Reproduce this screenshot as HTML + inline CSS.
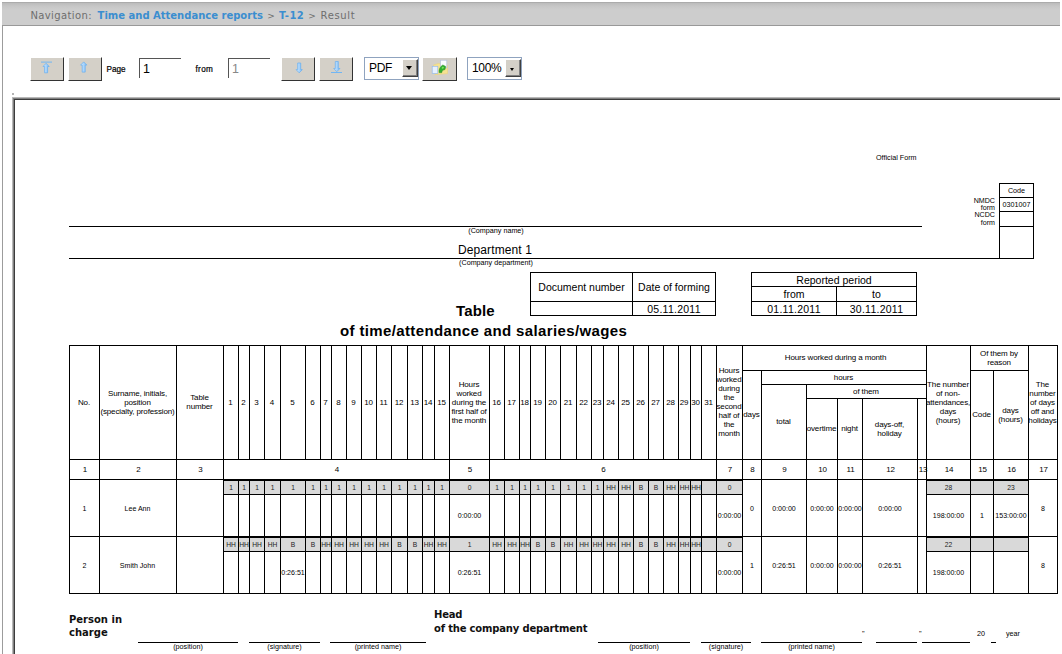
<!DOCTYPE html>
<html><head><meta charset="utf-8"><title>T-12 Result</title>
<style>
html,body{margin:0;padding:0;background:#fff;}
body{width:1062px;height:654px;position:relative;overflow:hidden;font-family:"Liberation Sans",sans-serif;color:#000;}
.l{position:absolute;}
.t{position:absolute;display:flex;align-items:center;justify-content:center;text-align:center;white-space:nowrap;color:#000;}
.t span{display:block;}
.h{font-size:8px;line-height:9px;letter-spacing:-0.13px;}
.n{font-size:8px;line-height:9px;letter-spacing:-0.13px;}
.d{font-size:7.05px;line-height:8px;}
.b{font-size:6.7px;line-height:8px;color:#1c1c1c;}
.a{position:absolute;white-space:nowrap;}
#nav{position:absolute;left:2px;top:2px;width:1058px;height:22px;background:linear-gradient(#bbbbbb 0,#c6c6c6 3px,#cdcdcd 7px,#cdcdcd 100%);border-top:1px solid #ababab;border-bottom:1px solid #999;}
.nv{position:absolute;top:10px;font-family:"DejaVu Sans",sans-serif;font-size:10px;line-height:12px;color:#6e6e6e;white-space:nowrap;}
.nb{color:#3b8ed0;font-weight:bold;}
.btn{position:absolute;top:57px;width:34px;height:24px;box-sizing:border-box;background:#d4d0c8;border-top:1px solid #fff;border-left:1px solid #fff;border-right:1px solid #333;border-bottom:1px solid #333;}
.btn svg{position:absolute;left:-1px;top:-1px;}
.inp{position:absolute;top:58px;width:42px;height:20px;box-sizing:border-box;border-top:1px solid #555;border-left:1px solid #555;font-size:12.5px;line-height:21px;padding-left:3px;}
.sel{position:absolute;top:57px;width:55px;height:23px;box-sizing:border-box;border:1px solid #8fa3bf;background:#fff;font-size:12px;letter-spacing:-0.3px;line-height:21px;padding-left:4px;}
.dd{position:absolute;left:37px;top:1px;width:16px;height:18px;box-sizing:border-box;background:#d4d0c8;border-top:1px solid #fff;border-left:1px solid #fff;border-right:1px solid #404040;border-bottom:1px solid #404040;}
.dd:after{content:"";position:absolute;left:0;top:0;right:0;bottom:0;border-right:1px solid #808080;border-bottom:1px solid #808080;}
.dd:before{content:"";position:absolute;left:3px;top:6px;border-left:3.5px solid transparent;border-right:3.5px solid transparent;border-top:4px solid #000;}
.dd.sm:before{left:4px;top:8px;border-left-width:2.7px;border-right-width:2.7px;border-top-width:3px;}
.s5{font-size:7.2px;line-height:8px;color:#000;}
.s8{font-size:10.5px;line-height:12px;color:#000;}
.dt{letter-spacing:0.25px;}
</style></head><body>
<!-- outer chrome -->
<div id="nav"></div>
<div class="nv" style="left:30.4px;letter-spacing:0.38px;">Navigation:</div>
<div class="nv nb" style="left:97.6px;">Time and Attendance reports</div>
<div class="nv" style="left:267.2px;font-size:9px;">&gt;</div>
<div class="nv nb" style="left:279.1px;letter-spacing:0.4px;">T-12</div>
<div class="nv" style="left:308.2px;font-size:9px;">&gt;</div>
<div class="nv" style="left:320.5px;letter-spacing:0.65px;">Result</div>
<div class="l" style="left:2px;top:26px;width:1px;height:628px;background:#9c9c9c"></div>

<!-- toolbar -->
<div class="btn" style="left:30px"><svg width="34" height="24" viewBox="0 0 34 24"><defs><linearGradient id="ag1" x1="0" x2="1" y1="0" y2="0"><stop offset="0" stop-color="#d6ecff"/><stop offset="1" stop-color="#7dbcf7"/></linearGradient></defs><rect x="11" y="4.6" width="11" height="1" fill="#72b6f3"/><path d="M16.1,6.3 L19.200000000000003,9.5 L17.6,9.5 L17.6,15.8 L14.600000000000001,15.8 L14.600000000000001,9.5 L13.000000000000002,9.5 Z" fill="url(#ag1)" stroke="#64adf1" stroke-width="0.7" stroke-linejoin="round"/></svg></div>
<div class="btn" style="left:68px"><svg width="34" height="24" viewBox="0 0 34 24"><defs><linearGradient id="ag2" x1="0" x2="1" y1="0" y2="0"><stop offset="0" stop-color="#d6ecff"/><stop offset="1" stop-color="#7dbcf7"/></linearGradient></defs><path d="M15.7,4.9 L18.8,8.100000000000001 L17.2,8.100000000000001 L17.2,15.1 L14.2,15.1 L14.2,8.100000000000001 L12.6,8.100000000000001 Z" fill="url(#ag2)" stroke="#64adf1" stroke-width="0.7" stroke-linejoin="round"/></svg></div>
<div class="a" style="left:106.5px;top:65px;font-size:8.2px;line-height:10px;-webkit-text-stroke:0.2px #000;">Page</div>
<div class="inp" style="left:139px;">1</div>
<div class="a" style="left:195.5px;top:65px;font-size:8.2px;line-height:10px;letter-spacing:0.35px;-webkit-text-stroke:0.2px #000;">from</div>
<div class="inp" style="left:228px;color:#888;">1</div>
<div class="btn" style="left:281px"><svg width="34" height="24" viewBox="0 0 34 24"><defs><linearGradient id="ag3" x1="0" x2="1" y1="0" y2="0"><stop offset="0" stop-color="#d6ecff"/><stop offset="1" stop-color="#7dbcf7"/></linearGradient></defs><path d="M18.2,15.8 L21.3,12.600000000000001 L19.7,12.600000000000001 L19.7,6 L16.7,6 L16.7,12.600000000000001 L15.1,12.600000000000001 Z" fill="url(#ag3)" stroke="#64adf1" stroke-width="0.7" stroke-linejoin="round"/></svg></div>
<div class="btn" style="left:319px"><svg width="34" height="24" viewBox="0 0 34 24"><defs><linearGradient id="ag4" x1="0" x2="1" y1="0" y2="0"><stop offset="0" stop-color="#d6ecff"/><stop offset="1" stop-color="#7dbcf7"/></linearGradient></defs><path d="M17.8,14.7 L20.900000000000002,11.5 L19.3,11.5 L19.3,4.5 L16.3,4.5 L16.3,11.5 L14.700000000000001,11.5 Z" fill="url(#ag4)" stroke="#64adf1" stroke-width="0.7" stroke-linejoin="round"/><rect x="12" y="15" width="11" height="1" fill="#72b6f3"/></svg></div>
<div class="sel" style="left:364px;">PDF<div class="dd"></div></div>
<div class="btn" style="left:422px;width:35px"><svg width="35" height="24" viewBox="0 0 35 24"><path d="M11.5,8 L16.5,6.4 L25.5,8.5 L25.5,16.6 L13,17.7 Z" fill="#f5e291" stroke="#ecd372" stroke-width="0.5"/>
<rect x="18.5" y="3.2" width="6.3" height="7.6" fill="#f9fcff" stroke="#b4c2dc" stroke-width="0.7"/>
<rect x="10.2" y="9.3" width="5.6" height="7.2" fill="#e6f1ff" stroke="#98b9e6" stroke-width="0.7"/>
<path d="M17.1,15.6 C16.8,12.4 18,9.6 20.8,8 L23.6,9.4 L23,12.6 C21.2,12.6 20.2,13.6 19.6,15.8 Z" fill="#31b031" stroke="#1c861c" stroke-width="0.5"/>
<path d="M19.8,10.2 C20.6,9.6 21.6,9.6 22,10.4 C21.6,11.4 20.6,11.8 19.8,11.6 Z" fill="#7be25e"/></svg></div>
<div class="sel" style="left:467px;">100%<div class="dd sm"></div></div>

<!-- viewer frame -->
<div class="l" style="left:12px;top:97px;width:1048px;height:1px;background:#b8b8b8"></div>
<div class="l" style="left:12px;top:97px;width:1px;height:557px;background:#b8b8b8"></div>
<div class="l" style="left:13px;top:98px;width:1047px;height:1px;background:#808080"></div>
<div class="l" style="left:13px;top:98px;width:1px;height:556px;background:#808080"></div>
<div class="l" style="left:14px;top:99px;width:1046px;height:1px;background:#3c3c3c"></div>
<div class="l" style="left:14px;top:99px;width:1px;height:555px;background:#3c3c3c"></div>
<div class="l" style="left:12px;top:93px;width:2px;height:2px;background:#b4b4b4"></div>

<!-- report header -->
<div class="a s5" style="left:876px;top:154px;">Official Form</div>
<div class="l" style="left:69px;top:226px;width:853px;height:1px;background:#000"></div>
<div class="l" style="left:69px;top:258px;width:931px;height:1px;background:#000"></div>
<div class="t s5" style="left:396px;top:227px;width:200px;height:8px;"><span>(Company name)</span></div>
<div class="t" style="left:395px;top:243px;width:200px;height:14px;font-size:12px;line-height:14px;letter-spacing:0.12px;"><span>Department 1</span></div>
<div class="t s5" style="left:396px;top:259px;width:200px;height:8px;"><span>(Company department)</span></div>
<!-- code box -->
<div class="l" style="left:999px;top:183px;width:35px;height:1px;background:#000"></div>
<div class="l" style="left:999px;top:197px;width:35px;height:1px;background:#000"></div>
<div class="l" style="left:999px;top:211px;width:35px;height:1px;background:#000"></div>
<div class="l" style="left:999px;top:226px;width:35px;height:1px;background:#000"></div>
<div class="l" style="left:999px;top:258px;width:35px;height:1px;background:#000"></div>
<div class="l" style="left:999px;top:183px;width:1px;height:76px;background:#000"></div>
<div class="l" style="left:1033px;top:183px;width:1px;height:76px;background:#000"></div>
<div class="t s5" style="left:999px;top:184px;width:35px;height:13px;"><span>Code</span></div>
<div class="t s5" style="left:999px;top:198px;width:35px;height:13px;"><span>0301007</span></div>
<div class="a s5" style="left:935px;top:197.6px;width:60px;text-align:right;line-height:7.4px;font-size:7.1px;">NMDC<br>form<br>NCDC<br>form</div>
<!-- doc number table -->
<div class="l" style="left:530px;top:272px;width:186px;height:1px;background:#000"></div>
<div class="l" style="left:530px;top:301px;width:186px;height:1px;background:#000"></div>
<div class="l" style="left:530px;top:315px;width:186px;height:1px;background:#000"></div>
<div class="l" style="left:530px;top:272px;width:1px;height:44px;background:#000"></div>
<div class="l" style="left:632px;top:272px;width:1px;height:44px;background:#000"></div>
<div class="l" style="left:715px;top:272px;width:1px;height:44px;background:#000"></div>
<div class="t s8" style="left:531px;top:273px;width:101px;height:28px;"><span>Document number</span></div>
<div class="t s8" style="left:633px;top:273px;width:82px;height:28px;"><span>Date of forming</span></div>
<div class="t s8 dt" style="left:633px;top:302px;width:82px;height:14px;"><span>05.11.2011</span></div>
<!-- reported period -->
<div class="l" style="left:751px;top:272px;width:166px;height:1px;background:#000"></div>
<div class="l" style="left:751px;top:286px;width:166px;height:1px;background:#000"></div>
<div class="l" style="left:751px;top:301px;width:166px;height:1px;background:#000"></div>
<div class="l" style="left:751px;top:315px;width:166px;height:1px;background:#000"></div>
<div class="l" style="left:751px;top:272px;width:1px;height:44px;background:#000"></div>
<div class="l" style="left:836px;top:286px;width:1px;height:30px;background:#000"></div>
<div class="l" style="left:916px;top:272px;width:1px;height:44px;background:#000"></div>
<div class="t s8" style="left:752px;top:273px;width:164px;height:14px;"><span>Reported period</span></div>
<div class="t s8" style="left:752px;top:287px;width:84px;height:14px;"><span>from</span></div>
<div class="t s8" style="left:837px;top:287px;width:79px;height:14px;"><span>to</span></div>
<div class="t s8 dt" style="left:752px;top:302px;width:84px;height:14px;"><span>01.11.2011</span></div>
<div class="t s8 dt" style="left:837px;top:302px;width:79px;height:14px;"><span>30.11.2011</span></div>
<!-- title -->
<div class="a" style="left:456px;top:302px;font-weight:bold;font-size:15px;line-height:18px;letter-spacing:0.15px;color:#000;">Table</div>
<div class="a" style="left:340px;top:322px;font-weight:bold;font-size:15px;line-height:18px;letter-spacing:0.37px;color:#000;">of time/attendance and salaries/wages</div>

<!-- main table -->
<div class="l" style="left:69px;top:345px;width:989px;height:1px;background:#000"></div>
<div class="l" style="left:69px;top:345px;width:1px;height:249px;background:#000"></div>
<div class="l" style="left:99px;top:345px;width:1px;height:249px;background:#000"></div>
<div class="l" style="left:176px;top:345px;width:1px;height:249px;background:#000"></div>
<div class="l" style="left:223px;top:345px;width:1px;height:249px;background:#000"></div>
<div class="l" style="left:238px;top:345px;width:1px;height:114px;background:#000"></div>
<div class="l" style="left:238px;top:479px;width:1px;height:115px;background:#000"></div>
<div class="l" style="left:249px;top:345px;width:1px;height:114px;background:#000"></div>
<div class="l" style="left:249px;top:479px;width:1px;height:115px;background:#000"></div>
<div class="l" style="left:264px;top:345px;width:1px;height:114px;background:#000"></div>
<div class="l" style="left:264px;top:479px;width:1px;height:115px;background:#000"></div>
<div class="l" style="left:280px;top:345px;width:1px;height:114px;background:#000"></div>
<div class="l" style="left:280px;top:479px;width:1px;height:115px;background:#000"></div>
<div class="l" style="left:305px;top:345px;width:1px;height:114px;background:#000"></div>
<div class="l" style="left:305px;top:479px;width:1px;height:115px;background:#000"></div>
<div class="l" style="left:320px;top:345px;width:1px;height:114px;background:#000"></div>
<div class="l" style="left:320px;top:479px;width:1px;height:115px;background:#000"></div>
<div class="l" style="left:331px;top:345px;width:1px;height:114px;background:#000"></div>
<div class="l" style="left:331px;top:479px;width:1px;height:115px;background:#000"></div>
<div class="l" style="left:346px;top:345px;width:1px;height:114px;background:#000"></div>
<div class="l" style="left:346px;top:479px;width:1px;height:115px;background:#000"></div>
<div class="l" style="left:361px;top:345px;width:1px;height:114px;background:#000"></div>
<div class="l" style="left:361px;top:479px;width:1px;height:115px;background:#000"></div>
<div class="l" style="left:376px;top:345px;width:1px;height:114px;background:#000"></div>
<div class="l" style="left:376px;top:479px;width:1px;height:115px;background:#000"></div>
<div class="l" style="left:391px;top:345px;width:1px;height:114px;background:#000"></div>
<div class="l" style="left:391px;top:479px;width:1px;height:115px;background:#000"></div>
<div class="l" style="left:407px;top:345px;width:1px;height:114px;background:#000"></div>
<div class="l" style="left:407px;top:479px;width:1px;height:115px;background:#000"></div>
<div class="l" style="left:422px;top:345px;width:1px;height:114px;background:#000"></div>
<div class="l" style="left:422px;top:479px;width:1px;height:115px;background:#000"></div>
<div class="l" style="left:434px;top:345px;width:1px;height:114px;background:#000"></div>
<div class="l" style="left:434px;top:479px;width:1px;height:115px;background:#000"></div>
<div class="l" style="left:449px;top:345px;width:1px;height:249px;background:#000"></div>
<div class="l" style="left:489px;top:345px;width:1px;height:249px;background:#000"></div>
<div class="l" style="left:504px;top:345px;width:1px;height:114px;background:#000"></div>
<div class="l" style="left:504px;top:479px;width:1px;height:115px;background:#000"></div>
<div class="l" style="left:519px;top:345px;width:1px;height:114px;background:#000"></div>
<div class="l" style="left:519px;top:479px;width:1px;height:115px;background:#000"></div>
<div class="l" style="left:530px;top:345px;width:1px;height:114px;background:#000"></div>
<div class="l" style="left:530px;top:479px;width:1px;height:115px;background:#000"></div>
<div class="l" style="left:545px;top:345px;width:1px;height:114px;background:#000"></div>
<div class="l" style="left:545px;top:479px;width:1px;height:115px;background:#000"></div>
<div class="l" style="left:560px;top:345px;width:1px;height:114px;background:#000"></div>
<div class="l" style="left:560px;top:479px;width:1px;height:115px;background:#000"></div>
<div class="l" style="left:576px;top:345px;width:1px;height:114px;background:#000"></div>
<div class="l" style="left:576px;top:479px;width:1px;height:115px;background:#000"></div>
<div class="l" style="left:591px;top:345px;width:1px;height:114px;background:#000"></div>
<div class="l" style="left:591px;top:479px;width:1px;height:115px;background:#000"></div>
<div class="l" style="left:603px;top:345px;width:1px;height:114px;background:#000"></div>
<div class="l" style="left:603px;top:479px;width:1px;height:115px;background:#000"></div>
<div class="l" style="left:618px;top:345px;width:1px;height:114px;background:#000"></div>
<div class="l" style="left:618px;top:479px;width:1px;height:115px;background:#000"></div>
<div class="l" style="left:633px;top:345px;width:1px;height:114px;background:#000"></div>
<div class="l" style="left:633px;top:479px;width:1px;height:115px;background:#000"></div>
<div class="l" style="left:648px;top:345px;width:1px;height:114px;background:#000"></div>
<div class="l" style="left:648px;top:479px;width:1px;height:115px;background:#000"></div>
<div class="l" style="left:663px;top:345px;width:1px;height:114px;background:#000"></div>
<div class="l" style="left:663px;top:479px;width:1px;height:115px;background:#000"></div>
<div class="l" style="left:678px;top:345px;width:1px;height:114px;background:#000"></div>
<div class="l" style="left:678px;top:479px;width:1px;height:115px;background:#000"></div>
<div class="l" style="left:690px;top:345px;width:1px;height:114px;background:#000"></div>
<div class="l" style="left:690px;top:479px;width:1px;height:115px;background:#000"></div>
<div class="l" style="left:701px;top:345px;width:1px;height:114px;background:#000"></div>
<div class="l" style="left:701px;top:479px;width:1px;height:115px;background:#000"></div>
<div class="l" style="left:716px;top:345px;width:1px;height:249px;background:#000"></div>
<div class="l" style="left:742px;top:345px;width:1px;height:249px;background:#000"></div>
<div class="l" style="left:761px;top:370px;width:1px;height:224px;background:#000"></div>
<div class="l" style="left:806px;top:384px;width:1px;height:210px;background:#000"></div>
<div class="l" style="left:837px;top:398px;width:1px;height:196px;background:#000"></div>
<div class="l" style="left:862px;top:398px;width:1px;height:196px;background:#000"></div>
<div class="l" style="left:917px;top:398px;width:1px;height:196px;background:#000"></div>
<div class="l" style="left:926px;top:345px;width:1px;height:249px;background:#000"></div>
<div class="l" style="left:970px;top:345px;width:1px;height:249px;background:#000"></div>
<div class="l" style="left:993px;top:370px;width:1px;height:224px;background:#000"></div>
<div class="l" style="left:1028px;top:345px;width:1px;height:249px;background:#000"></div>
<div class="l" style="left:1057px;top:345px;width:1px;height:249px;background:#000"></div>
<div class="l" style="left:742px;top:370px;width:184px;height:1px;background:#000"></div>
<div class="l" style="left:970px;top:370px;width:58px;height:1px;background:#000"></div>
<div class="l" style="left:761px;top:384px;width:165px;height:1px;background:#000"></div>
<div class="l" style="left:806px;top:398px;width:120px;height:1px;background:#000"></div>
<div class="l" style="left:69px;top:459px;width:989px;height:1px;background:#000"></div>
<div class="l" style="left:69px;top:479px;width:989px;height:1px;background:#000"></div>
<div class="l" style="left:69px;top:536px;width:989px;height:1px;background:#000"></div>
<div class="l" style="left:69px;top:593px;width:989px;height:1px;background:#000"></div>
<div class="l" style="left:224px;top:480px;width:518px;height:14px;background:#d9d9d9"></div>
<div class="l" style="left:223px;top:480px;width:520px;height:1px;background:#000"></div>
<div class="l" style="left:223px;top:494px;width:520px;height:1px;background:#000"></div>
<div class="l" style="left:224px;top:537px;width:518px;height:14px;background:#d9d9d9"></div>
<div class="l" style="left:223px;top:537px;width:520px;height:1px;background:#000"></div>
<div class="l" style="left:223px;top:551px;width:520px;height:1px;background:#000"></div>
<div class="l" style="left:927px;top:480px;width:101px;height:14px;background:#d9d9d9"></div>
<div class="l" style="left:926px;top:480px;width:103px;height:1px;background:#000"></div>
<div class="l" style="left:926px;top:494px;width:103px;height:1px;background:#000"></div>
<div class="l" style="left:927px;top:537px;width:101px;height:14px;background:#d9d9d9"></div>
<div class="l" style="left:926px;top:537px;width:103px;height:1px;background:#000"></div>
<div class="l" style="left:926px;top:551px;width:103px;height:1px;background:#000"></div>
<div class="l" style="left:223px;top:479px;width:1px;height:16px;background:#000"></div>
<div class="l" style="left:223px;top:536px;width:1px;height:16px;background:#000"></div>
<div class="l" style="left:238px;top:479px;width:1px;height:16px;background:#000"></div>
<div class="l" style="left:238px;top:536px;width:1px;height:16px;background:#000"></div>
<div class="l" style="left:249px;top:479px;width:1px;height:16px;background:#000"></div>
<div class="l" style="left:249px;top:536px;width:1px;height:16px;background:#000"></div>
<div class="l" style="left:264px;top:479px;width:1px;height:16px;background:#000"></div>
<div class="l" style="left:264px;top:536px;width:1px;height:16px;background:#000"></div>
<div class="l" style="left:280px;top:479px;width:1px;height:16px;background:#000"></div>
<div class="l" style="left:280px;top:536px;width:1px;height:16px;background:#000"></div>
<div class="l" style="left:305px;top:479px;width:1px;height:16px;background:#000"></div>
<div class="l" style="left:305px;top:536px;width:1px;height:16px;background:#000"></div>
<div class="l" style="left:320px;top:479px;width:1px;height:16px;background:#000"></div>
<div class="l" style="left:320px;top:536px;width:1px;height:16px;background:#000"></div>
<div class="l" style="left:331px;top:479px;width:1px;height:16px;background:#000"></div>
<div class="l" style="left:331px;top:536px;width:1px;height:16px;background:#000"></div>
<div class="l" style="left:346px;top:479px;width:1px;height:16px;background:#000"></div>
<div class="l" style="left:346px;top:536px;width:1px;height:16px;background:#000"></div>
<div class="l" style="left:361px;top:479px;width:1px;height:16px;background:#000"></div>
<div class="l" style="left:361px;top:536px;width:1px;height:16px;background:#000"></div>
<div class="l" style="left:376px;top:479px;width:1px;height:16px;background:#000"></div>
<div class="l" style="left:376px;top:536px;width:1px;height:16px;background:#000"></div>
<div class="l" style="left:391px;top:479px;width:1px;height:16px;background:#000"></div>
<div class="l" style="left:391px;top:536px;width:1px;height:16px;background:#000"></div>
<div class="l" style="left:407px;top:479px;width:1px;height:16px;background:#000"></div>
<div class="l" style="left:407px;top:536px;width:1px;height:16px;background:#000"></div>
<div class="l" style="left:422px;top:479px;width:1px;height:16px;background:#000"></div>
<div class="l" style="left:422px;top:536px;width:1px;height:16px;background:#000"></div>
<div class="l" style="left:434px;top:479px;width:1px;height:16px;background:#000"></div>
<div class="l" style="left:434px;top:536px;width:1px;height:16px;background:#000"></div>
<div class="l" style="left:449px;top:479px;width:1px;height:16px;background:#000"></div>
<div class="l" style="left:449px;top:536px;width:1px;height:16px;background:#000"></div>
<div class="l" style="left:489px;top:479px;width:1px;height:16px;background:#000"></div>
<div class="l" style="left:489px;top:536px;width:1px;height:16px;background:#000"></div>
<div class="l" style="left:504px;top:479px;width:1px;height:16px;background:#000"></div>
<div class="l" style="left:504px;top:536px;width:1px;height:16px;background:#000"></div>
<div class="l" style="left:519px;top:479px;width:1px;height:16px;background:#000"></div>
<div class="l" style="left:519px;top:536px;width:1px;height:16px;background:#000"></div>
<div class="l" style="left:530px;top:479px;width:1px;height:16px;background:#000"></div>
<div class="l" style="left:530px;top:536px;width:1px;height:16px;background:#000"></div>
<div class="l" style="left:545px;top:479px;width:1px;height:16px;background:#000"></div>
<div class="l" style="left:545px;top:536px;width:1px;height:16px;background:#000"></div>
<div class="l" style="left:560px;top:479px;width:1px;height:16px;background:#000"></div>
<div class="l" style="left:560px;top:536px;width:1px;height:16px;background:#000"></div>
<div class="l" style="left:576px;top:479px;width:1px;height:16px;background:#000"></div>
<div class="l" style="left:576px;top:536px;width:1px;height:16px;background:#000"></div>
<div class="l" style="left:591px;top:479px;width:1px;height:16px;background:#000"></div>
<div class="l" style="left:591px;top:536px;width:1px;height:16px;background:#000"></div>
<div class="l" style="left:603px;top:479px;width:1px;height:16px;background:#000"></div>
<div class="l" style="left:603px;top:536px;width:1px;height:16px;background:#000"></div>
<div class="l" style="left:618px;top:479px;width:1px;height:16px;background:#000"></div>
<div class="l" style="left:618px;top:536px;width:1px;height:16px;background:#000"></div>
<div class="l" style="left:633px;top:479px;width:1px;height:16px;background:#000"></div>
<div class="l" style="left:633px;top:536px;width:1px;height:16px;background:#000"></div>
<div class="l" style="left:648px;top:479px;width:1px;height:16px;background:#000"></div>
<div class="l" style="left:648px;top:536px;width:1px;height:16px;background:#000"></div>
<div class="l" style="left:663px;top:479px;width:1px;height:16px;background:#000"></div>
<div class="l" style="left:663px;top:536px;width:1px;height:16px;background:#000"></div>
<div class="l" style="left:678px;top:479px;width:1px;height:16px;background:#000"></div>
<div class="l" style="left:678px;top:536px;width:1px;height:16px;background:#000"></div>
<div class="l" style="left:690px;top:479px;width:1px;height:16px;background:#000"></div>
<div class="l" style="left:690px;top:536px;width:1px;height:16px;background:#000"></div>
<div class="l" style="left:701px;top:479px;width:1px;height:16px;background:#000"></div>
<div class="l" style="left:701px;top:536px;width:1px;height:16px;background:#000"></div>
<div class="l" style="left:716px;top:479px;width:1px;height:16px;background:#000"></div>
<div class="l" style="left:716px;top:536px;width:1px;height:16px;background:#000"></div>
<div class="l" style="left:742px;top:479px;width:1px;height:16px;background:#000"></div>
<div class="l" style="left:742px;top:536px;width:1px;height:16px;background:#000"></div>
<div class="l" style="left:926px;top:479px;width:1px;height:16px;background:#000"></div>
<div class="l" style="left:926px;top:536px;width:1px;height:16px;background:#000"></div>
<div class="l" style="left:970px;top:479px;width:1px;height:16px;background:#000"></div>
<div class="l" style="left:970px;top:536px;width:1px;height:16px;background:#000"></div>
<div class="l" style="left:993px;top:479px;width:1px;height:16px;background:#000"></div>
<div class="l" style="left:993px;top:536px;width:1px;height:16px;background:#000"></div>
<div class="l" style="left:1028px;top:479px;width:1px;height:16px;background:#000"></div>
<div class="l" style="left:1028px;top:536px;width:1px;height:16px;background:#000"></div>
<div class="t h" style="left:69px;top:345px;width:30px;height:114px;"><span>No.</span></div>
<div class="t h" style="left:99px;top:345px;width:77px;height:114px;"><span>Surname, initials,<br>position<br>(specialty, profession)</span></div>
<div class="t h" style="left:176px;top:345px;width:47px;height:114px;"><span>Table<br>number</span></div>
<div class="t h" style="left:223px;top:345px;width:15px;height:114px;"><span>1</span></div>
<div class="t h" style="left:238px;top:345px;width:11px;height:114px;"><span>2</span></div>
<div class="t h" style="left:249px;top:345px;width:15px;height:114px;"><span>3</span></div>
<div class="t h" style="left:264px;top:345px;width:16px;height:114px;"><span>4</span></div>
<div class="t h" style="left:280px;top:345px;width:25px;height:114px;"><span>5</span></div>
<div class="t h" style="left:305px;top:345px;width:15px;height:114px;"><span>6</span></div>
<div class="t h" style="left:320px;top:345px;width:11px;height:114px;"><span>7</span></div>
<div class="t h" style="left:331px;top:345px;width:15px;height:114px;"><span>8</span></div>
<div class="t h" style="left:346px;top:345px;width:15px;height:114px;"><span>9</span></div>
<div class="t h" style="left:361px;top:345px;width:15px;height:114px;"><span>10</span></div>
<div class="t h" style="left:376px;top:345px;width:15px;height:114px;"><span>11</span></div>
<div class="t h" style="left:391px;top:345px;width:16px;height:114px;"><span>12</span></div>
<div class="t h" style="left:407px;top:345px;width:15px;height:114px;"><span>13</span></div>
<div class="t h" style="left:422px;top:345px;width:12px;height:114px;"><span>14</span></div>
<div class="t h" style="left:434px;top:345px;width:15px;height:114px;"><span>15</span></div>
<div class="t h" style="left:449px;top:345px;width:40px;height:114px;"><span>Hours<br>worked<br>during the<br>first half of<br>the month</span></div>
<div class="t h" style="left:489px;top:345px;width:15px;height:114px;"><span>16</span></div>
<div class="t h" style="left:504px;top:345px;width:15px;height:114px;"><span>17</span></div>
<div class="t h" style="left:519px;top:345px;width:11px;height:114px;"><span>18</span></div>
<div class="t h" style="left:530px;top:345px;width:15px;height:114px;"><span>19</span></div>
<div class="t h" style="left:545px;top:345px;width:15px;height:114px;"><span>20</span></div>
<div class="t h" style="left:560px;top:345px;width:16px;height:114px;"><span>21</span></div>
<div class="t h" style="left:576px;top:345px;width:15px;height:114px;"><span>22</span></div>
<div class="t h" style="left:591px;top:345px;width:12px;height:114px;"><span>23</span></div>
<div class="t h" style="left:603px;top:345px;width:15px;height:114px;"><span>24</span></div>
<div class="t h" style="left:618px;top:345px;width:15px;height:114px;"><span>25</span></div>
<div class="t h" style="left:633px;top:345px;width:15px;height:114px;"><span>26</span></div>
<div class="t h" style="left:648px;top:345px;width:15px;height:114px;"><span>27</span></div>
<div class="t h" style="left:663px;top:345px;width:15px;height:114px;"><span>28</span></div>
<div class="t h" style="left:678px;top:345px;width:12px;height:114px;"><span>29</span></div>
<div class="t h" style="left:690px;top:345px;width:11px;height:114px;"><span>30</span></div>
<div class="t h" style="left:701px;top:345px;width:15px;height:114px;"><span>31</span></div>
<div class="t h" style="left:716px;top:345px;width:26px;height:114px;"><span>Hours<br>worked<br>during<br>the<br>second<br>half of<br>the<br>month</span></div>
<div class="t h" style="left:745px;top:345px;width:181px;height:25px;"><span>Hours worked during a month</span></div>
<div class="t h" style="left:742px;top:370px;width:19px;height:89px;"><span>days</span></div>
<div class="t h" style="left:761px;top:370px;width:165px;height:14px;"><span>hours</span></div>
<div class="t h" style="left:761px;top:384px;width:45px;height:75px;"><span>total</span></div>
<div class="t h" style="left:806px;top:384px;width:120px;height:14px;"><span>of them</span></div>
<div class="t h" style="left:806px;top:398px;width:31px;height:61px;"><span>overtime</span></div>
<div class="t h" style="left:837px;top:398px;width:25px;height:61px;"><span>night</span></div>
<div class="t h" style="left:862px;top:398px;width:55px;height:61px;"><span>days-off,<br>holiday</span></div>
<div class="t h" style="left:926px;top:345px;width:44px;height:114px;"><span>The number<br>of non-<br>attendances,<br>days<br>(hours)</span></div>
<div class="t h" style="left:970px;top:345px;width:58px;height:25px;"><span>Of them by<br>reason</span></div>
<div class="t h" style="left:970px;top:370px;width:23px;height:89px;"><span>Code</span></div>
<div class="t h" style="left:993px;top:370px;width:35px;height:89px;"><span>days<br>(hours)</span></div>
<div class="t h" style="left:1028px;top:345px;width:29px;height:114px;"><span>The<br>number<br>of days<br>off and<br>holidays</span></div>
<div class="t n" style="left:71px;top:459px;width:28px;height:20px;"><span>1</span></div>
<div class="t n" style="left:101px;top:459px;width:75px;height:20px;"><span>2</span></div>
<div class="t n" style="left:178px;top:459px;width:45px;height:20px;"><span>3</span></div>
<div class="t n" style="left:225px;top:459px;width:224px;height:20px;"><span>4</span></div>
<div class="t n" style="left:451px;top:459px;width:38px;height:20px;"><span>5</span></div>
<div class="t n" style="left:491px;top:459px;width:225px;height:20px;"><span>6</span></div>
<div class="t n" style="left:718px;top:459px;width:24px;height:20px;"><span>7</span></div>
<div class="t n" style="left:744px;top:459px;width:17px;height:20px;"><span>8</span></div>
<div class="t n" style="left:763px;top:459px;width:43px;height:20px;"><span>9</span></div>
<div class="t n" style="left:808px;top:459px;width:29px;height:20px;"><span>10</span></div>
<div class="t n" style="left:839px;top:459px;width:23px;height:20px;"><span>11</span></div>
<div class="t n" style="left:864px;top:459px;width:53px;height:20px;"><span>12</span></div>
<div class="t n" style="left:916px;top:459px;width:14px;height:20px;"><span>13</span></div>
<div class="t n" style="left:928px;top:459px;width:42px;height:20px;"><span>14</span></div>
<div class="t n" style="left:972px;top:459px;width:21px;height:20px;"><span>15</span></div>
<div class="t n" style="left:995px;top:459px;width:33px;height:20px;"><span>16</span></div>
<div class="t n" style="left:1030px;top:459px;width:27px;height:20px;"><span>17</span></div>
<div class="t d" style="left:70px;top:481px;width:29px;height:55px;"><span>1</span></div>
<div class="t d" style="left:99px;top:481px;width:77px;height:55px;"><span>Lee Ann</span></div>
<div class="t b" style="left:223px;top:481px;width:16px;height:13px;"><span>1</span></div>
<div class="t b" style="left:238px;top:481px;width:12px;height:13px;"><span>1</span></div>
<div class="t b" style="left:249px;top:481px;width:16px;height:13px;"><span>1</span></div>
<div class="t b" style="left:264px;top:481px;width:17px;height:13px;"><span>1</span></div>
<div class="t b" style="left:280px;top:481px;width:26px;height:13px;"><span>1</span></div>
<div class="t b" style="left:305px;top:481px;width:16px;height:13px;"><span>1</span></div>
<div class="t b" style="left:320px;top:481px;width:12px;height:13px;"><span>1</span></div>
<div class="t b" style="left:331px;top:481px;width:16px;height:13px;"><span>1</span></div>
<div class="t b" style="left:346px;top:481px;width:16px;height:13px;"><span>1</span></div>
<div class="t b" style="left:361px;top:481px;width:16px;height:13px;"><span>1</span></div>
<div class="t b" style="left:376px;top:481px;width:16px;height:13px;"><span>1</span></div>
<div class="t b" style="left:391px;top:481px;width:17px;height:13px;"><span>1</span></div>
<div class="t b" style="left:407px;top:481px;width:16px;height:13px;"><span>1</span></div>
<div class="t b" style="left:422px;top:481px;width:13px;height:13px;"><span>1</span></div>
<div class="t b" style="left:434px;top:481px;width:16px;height:13px;"><span>1</span></div>
<div class="t b" style="left:489px;top:481px;width:16px;height:13px;"><span>1</span></div>
<div class="t b" style="left:504px;top:481px;width:16px;height:13px;"><span>1</span></div>
<div class="t b" style="left:519px;top:481px;width:12px;height:13px;"><span>1</span></div>
<div class="t b" style="left:530px;top:481px;width:16px;height:13px;"><span>1</span></div>
<div class="t b" style="left:545px;top:481px;width:16px;height:13px;"><span>1</span></div>
<div class="t b" style="left:560px;top:481px;width:17px;height:13px;"><span>1</span></div>
<div class="t b" style="left:576px;top:481px;width:16px;height:13px;"><span>1</span></div>
<div class="t b" style="left:591px;top:481px;width:13px;height:13px;"><span>1</span></div>
<div class="t b" style="left:603px;top:481px;width:16px;height:13px;"><span>HH</span></div>
<div class="t b" style="left:618px;top:481px;width:16px;height:13px;"><span>HH</span></div>
<div class="t b" style="left:633px;top:481px;width:16px;height:13px;"><span>B</span></div>
<div class="t b" style="left:648px;top:481px;width:16px;height:13px;"><span>B</span></div>
<div class="t b" style="left:663px;top:481px;width:16px;height:13px;"><span>HH</span></div>
<div class="t b" style="left:678px;top:481px;width:13px;height:13px;"><span>HH</span></div>
<div class="t b" style="left:690px;top:481px;width:12px;height:13px;"><span>HH</span></div>
<div class="t b" style="left:449px;top:481px;width:41px;height:13px;"><span>0</span></div>
<div class="t d" style="left:445px;top:495px;width:49px;height:41px;"><span>0:00:00</span></div>
<div class="t b" style="left:716px;top:481px;width:27px;height:13px;"><span>0</span></div>
<div class="t d" style="left:712px;top:495px;width:35px;height:41px;"><span>0:00:00</span></div>
<div class="t b" style="left:926px;top:481px;width:45px;height:13px;"><span>28</span></div>
<div class="t d" style="left:922px;top:495px;width:53px;height:41px;"><span>198:00:00</span></div>
<div class="t d" style="left:966px;top:495px;width:32px;height:41px;"><span>1</span></div>
<div class="t b" style="left:993px;top:481px;width:36px;height:13px;"><span>23</span></div>
<div class="t d" style="left:989px;top:495px;width:44px;height:41px;"><span>153:00:00</span></div>
<div class="t d" style="left:738px;top:481px;width:28px;height:55px;"><span>0</span></div>
<div class="t d" style="left:757px;top:481px;width:54px;height:55px;"><span>0:00:00</span></div>
<div class="t d" style="left:802px;top:481px;width:40px;height:55px;"><span>0:00:00</span></div>
<div class="t d" style="left:833px;top:481px;width:34px;height:55px;"><span>0:00:00</span></div>
<div class="t d" style="left:858px;top:481px;width:64px;height:55px;"><span>0:00:00</span></div>
<div class="t d" style="left:1024px;top:481px;width:38px;height:55px;"><span>8</span></div>
<div class="t d" style="left:70px;top:538px;width:29px;height:55px;"><span>2</span></div>
<div class="t d" style="left:99px;top:538px;width:77px;height:55px;"><span>Smith John</span></div>
<div class="t b" style="left:223px;top:538px;width:16px;height:13px;"><span>HH</span></div>
<div class="t b" style="left:238px;top:538px;width:12px;height:13px;"><span>HH</span></div>
<div class="t b" style="left:249px;top:538px;width:16px;height:13px;"><span>HH</span></div>
<div class="t b" style="left:264px;top:538px;width:17px;height:13px;"><span>HH</span></div>
<div class="t b" style="left:280px;top:538px;width:26px;height:13px;"><span>B</span></div>
<div class="t d" style="left:276px;top:552px;width:34px;height:41px;"><span>0:26:51</span></div>
<div class="t b" style="left:305px;top:538px;width:16px;height:13px;"><span>B</span></div>
<div class="t b" style="left:320px;top:538px;width:12px;height:13px;"><span>HH</span></div>
<div class="t b" style="left:331px;top:538px;width:16px;height:13px;"><span>HH</span></div>
<div class="t b" style="left:346px;top:538px;width:16px;height:13px;"><span>HH</span></div>
<div class="t b" style="left:361px;top:538px;width:16px;height:13px;"><span>HH</span></div>
<div class="t b" style="left:376px;top:538px;width:16px;height:13px;"><span>HH</span></div>
<div class="t b" style="left:391px;top:538px;width:17px;height:13px;"><span>B</span></div>
<div class="t b" style="left:407px;top:538px;width:16px;height:13px;"><span>B</span></div>
<div class="t b" style="left:422px;top:538px;width:13px;height:13px;"><span>HH</span></div>
<div class="t b" style="left:434px;top:538px;width:16px;height:13px;"><span>HH</span></div>
<div class="t b" style="left:489px;top:538px;width:16px;height:13px;"><span>HH</span></div>
<div class="t b" style="left:504px;top:538px;width:16px;height:13px;"><span>HH</span></div>
<div class="t b" style="left:519px;top:538px;width:12px;height:13px;"><span>HH</span></div>
<div class="t b" style="left:530px;top:538px;width:16px;height:13px;"><span>B</span></div>
<div class="t b" style="left:545px;top:538px;width:16px;height:13px;"><span>B</span></div>
<div class="t b" style="left:560px;top:538px;width:17px;height:13px;"><span>HH</span></div>
<div class="t b" style="left:576px;top:538px;width:16px;height:13px;"><span>HH</span></div>
<div class="t b" style="left:591px;top:538px;width:13px;height:13px;"><span>HH</span></div>
<div class="t b" style="left:603px;top:538px;width:16px;height:13px;"><span>HH</span></div>
<div class="t b" style="left:618px;top:538px;width:16px;height:13px;"><span>HH</span></div>
<div class="t b" style="left:633px;top:538px;width:16px;height:13px;"><span>B</span></div>
<div class="t b" style="left:648px;top:538px;width:16px;height:13px;"><span>B</span></div>
<div class="t b" style="left:663px;top:538px;width:16px;height:13px;"><span>HH</span></div>
<div class="t b" style="left:678px;top:538px;width:13px;height:13px;"><span>HH</span></div>
<div class="t b" style="left:690px;top:538px;width:12px;height:13px;"><span>HH</span></div>
<div class="t b" style="left:449px;top:538px;width:41px;height:13px;"><span>1</span></div>
<div class="t d" style="left:445px;top:552px;width:49px;height:41px;"><span>0:26:51</span></div>
<div class="t b" style="left:716px;top:538px;width:27px;height:13px;"><span>0</span></div>
<div class="t d" style="left:712px;top:552px;width:35px;height:41px;"><span>0:00:00</span></div>
<div class="t b" style="left:926px;top:538px;width:45px;height:13px;"><span>22</span></div>
<div class="t d" style="left:922px;top:552px;width:53px;height:41px;"><span>198:00:00</span></div>
<div class="t d" style="left:738px;top:538px;width:28px;height:55px;"><span>1</span></div>
<div class="t d" style="left:757px;top:538px;width:54px;height:55px;"><span>0:26:51</span></div>
<div class="t d" style="left:802px;top:538px;width:40px;height:55px;"><span>0:00:00</span></div>
<div class="t d" style="left:833px;top:538px;width:34px;height:55px;"><span>0:00:00</span></div>
<div class="t d" style="left:858px;top:538px;width:64px;height:55px;"><span>0:26:51</span></div>
<div class="t d" style="left:1024px;top:538px;width:38px;height:55px;"><span>8</span></div>

<!-- footer -->
<div class="a" style="left:69px;top:613px;font-family:'DejaVu Sans',sans-serif;font-weight:bold;font-size:10px;line-height:13px;color:#111;">Person in<br>charge</div>
<div class="a" style="left:434px;top:608px;font-family:'DejaVu Sans',sans-serif;font-weight:bold;font-size:10px;line-height:13.5px;letter-spacing:-0.18px;color:#111;">Head<br>of the company department</div>
<div class="l" style="left:138px;top:642px;width:100px;height:1px;background:#000"></div>
<div class="l" style="left:249px;top:642px;width:71px;height:1px;background:#000"></div>
<div class="l" style="left:330px;top:642px;width:96px;height:1px;background:#000"></div>
<div class="l" style="left:598px;top:642px;width:92px;height:1px;background:#000"></div>
<div class="l" style="left:701px;top:642px;width:50px;height:1px;background:#000"></div>
<div class="l" style="left:761px;top:642px;width:101px;height:1px;background:#000"></div>
<div class="l" style="left:876px;top:642px;width:41px;height:1px;background:#000"></div>
<div class="l" style="left:922px;top:642px;width:48px;height:1px;background:#000"></div>
<div class="l" style="left:991px;top:642px;width:5px;height:1px;background:#000"></div>
<div class="t s5" style="left:138px;top:643px;width:100px;height:8px;"><span>(position)</span></div>
<div class="t s5" style="left:249px;top:643px;width:71px;height:8px;"><span>(signature)</span></div>
<div class="t s5" style="left:330px;top:643px;width:96px;height:8px;"><span>(printed name)</span></div>
<div class="t s5" style="left:598px;top:643px;width:92px;height:8px;"><span>(position)</span></div>
<div class="t s5" style="left:701px;top:643px;width:50px;height:8px;"><span>(signature)</span></div>
<div class="t s5" style="left:761px;top:643px;width:101px;height:8px;"><span>(printed name)</span></div>
<div class="a s5" style="left:862px;top:630px;">"</div>
<div class="a s5" style="left:919px;top:630px;">"</div>
<div class="a s5" style="left:977px;top:630px;">20</div>
<div class="a s5" style="left:1006px;top:630px;">year</div>
</body></html>
